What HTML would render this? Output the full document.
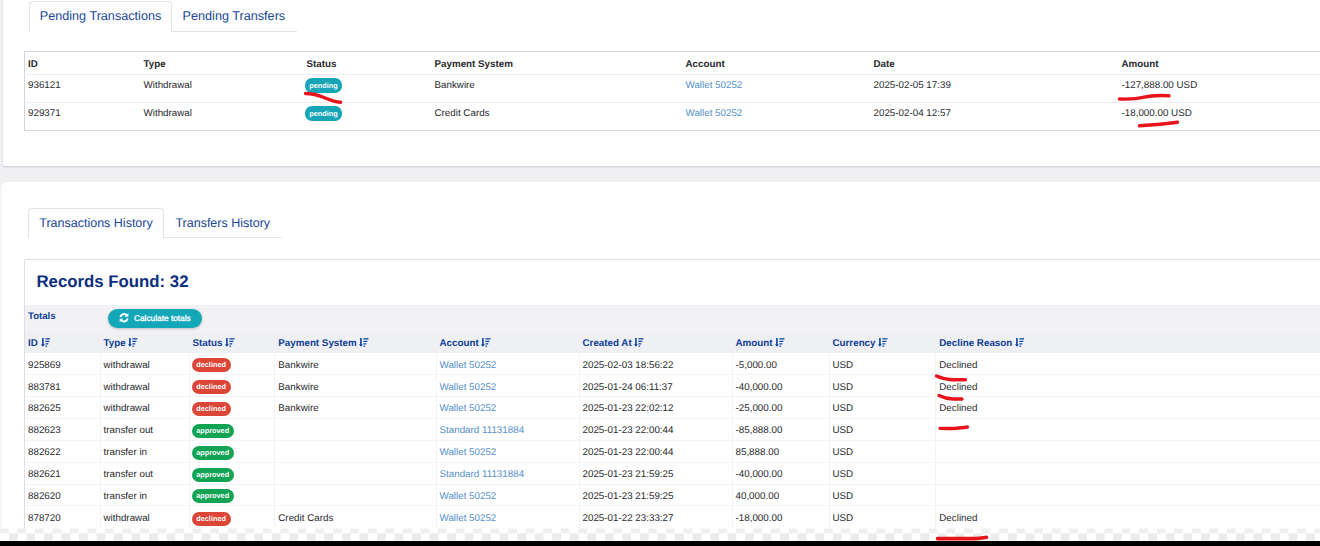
<!DOCTYPE html>
<html>
<head>
<meta charset="utf-8">
<style>
*{box-sizing:border-box;margin:0;padding:0}
html,body{width:1320px;height:546px;overflow:hidden}
body{text-rendering:geometricPrecision;background:#f0eff1;font-family:"Liberation Sans",sans-serif;color:#2a2a2e;position:relative}
.card{position:absolute;background:#fff;border-radius:4px;box-shadow:0 1px 2px rgba(120,120,150,.35)}
#c1{left:3px;top:-20px;width:1400px;height:186px;border-radius:0 0 0 2px}
#ls{position:absolute;left:0;top:185px;width:2px;height:361px;background:#f6f6f7}
#c2{left:2px;top:182px;width:1400px;height:400px}
.tabs{position:absolute;display:flex;border-bottom:1px solid #e2e3eb;font-size:12.65px;color:#1a4798}
.tab{padding:0 11px;white-space:nowrap}
.tab.act{border:1px solid #e2e3eb;border-bottom:0;border-radius:4px 4px 0 0;background:#fff;margin-bottom:-1px;padding:0;text-align:center}
#t1{left:29px;top:1px;width:268px;height:31px}
#t1 .tab{line-height:30.6px;padding:0 0 0 10.6px}
#t1 .tab.act{height:31px;width:143px;padding:0;line-height:29.6px}
#t2{left:28px;top:208px;width:254px;height:30px;font-size:12.5px}
#t2 .tab{line-height:30.6px;padding:0 0 0 11.4px}
#t2 .tab.act{height:30px;width:136px;padding:0;line-height:29.6px}
.tbl{position:absolute;border-collapse:collapse;font-size:9.8px}
#p{left:24px;top:51px;width:1400px;border:1px solid #d4d5df}
#p th,#p td{text-align:left;padding:5px 0 0 3px;height:28px;border-top:1px solid #ebecf1;vertical-align:top;line-height:12px}
#p th{height:23px;border-top:0;font-weight:bold;padding-top:7px}
.lnk{color:#5590cb}
.b{display:inline-block;color:#fff;font-weight:bold;font-size:7.3px;height:14px;line-height:14px;border-radius:7px;padding:0 4.8px;vertical-align:top}
.pen{background:#17a5b8}
.dec{background:#dc4637}
.app{background:#12a454}
#p .b{margin-top:-1.8px;margin-left:-2px;height:14.4px;line-height:15.2px}
#box{position:absolute;left:23.5px;top:259px;width:1400px;height:300px;border:1px solid #dcdde8;border-radius:2px}
#rf{position:absolute;left:36.5px;top:272px;font-size:16.8px;font-weight:bold;color:#0b2f7d}
#tot{position:absolute;left:25px;top:305px;width:1400px;height:28px;background:#f2f2f4}
#tot span.l{position:absolute;left:3px;top:6px;font-size:9.65px;font-weight:bold;color:#0f3e96}
#calc{position:absolute;left:108px;top:309px;width:94px;height:19px;border-radius:10px;background:#14a7b8;color:#fff;font-size:8.3px;line-height:19px;padding-left:26px;box-shadow:0 1px 3px rgba(0,0,0,.22);-webkit-text-stroke:.3px #fff}
#calc svg{position:absolute;left:11px;top:4.3px;width:10px;height:9.5px}
#h{left:25px;top:333px;width:1400px}
#h th{background:#eef0f4;color:#0f3e96;text-align:left;font-weight:bold;height:20px;padding:1px 0 0 3px;border-left:1px solid #f1f2f6;white-space:nowrap}
#h th:first-child,#h td:first-child{border-left:0}
#h td{height:21.85px;padding:3px 0 0 3px;border-left:1px solid #f4f4f8;border-top:1px solid #f4f4f8;vertical-align:middle}
#h .b{position:relative;top:0;margin-left:-1px}
#h tr:nth-child(2) td{border-top:0}
#h th:nth-child(4),#h td:nth-child(4),#h th:nth-child(9),#h td:nth-child(9){padding-left:3.8px}
#h tr:nth-child(4) td:not(:nth-child(3)){padding-top:1px}
svg.s{width:9.5px;height:8.8px;fill:#0c43a3;vertical-align:-0.5px;margin-left:0}
#chk{position:absolute;left:0;top:528px}
#blk{position:absolute;left:0;top:540.5px;width:1320px;height:6px;background:#000}
svg.red{position:absolute;left:0;top:0;width:1320px;height:546px;pointer-events:none}
</style>
</head>
<body>
<div class="card" id="c1"></div>
<div class="card" id="c2"></div>
<div id="ls"></div>

<div class="tabs" id="t1"><div class="tab act">Pending Transactions</div><div class="tab">Pending Transfers</div></div>

<table class="tbl" id="p">
<tr><th style="width:116px">ID</th><th style="width:163px">Type</th><th style="width:128px">Status</th><th style="width:251px">Payment System</th><th style="width:188px">Account</th><th style="width:248px">Date</th><th>Amount</th></tr>
<tr><td>936121</td><td>Withdrawal</td><td><span class="b pen">pending</span></td><td>Bankwire</td><td class="lnk">Wallet 50252</td><td>2025-02-05 17:39</td><td>-127,888.00 USD</td></tr>
<tr><td>929371</td><td>Withdrawal</td><td><span class="b pen">pending</span></td><td>Credit Cards</td><td class="lnk">Wallet 50252</td><td>2025-02-04 12:57</td><td>-18,000.00 USD</td></tr>
</table>

<div class="tabs" id="t2"><div class="tab act">Transactions History</div><div class="tab">Transfers History</div></div>

<div id="box"></div>
<div id="rf">Records Found: 32</div>
<div id="tot"><span class="l">Totals</span></div>
<div id="calc"><svg viewBox="0 0 10 9.5" fill="none" stroke="#fff" stroke-width="1.9"><path d="M1.4 4.2 A3.6 3.6 0 0 1 7.6 2.2"/><path d="M8.6 5.3 A3.6 3.6 0 0 1 2.4 7.3"/><polygon points="9.3,0.3 9.3,3.8 5.8,3.8" fill="#fff" stroke="none"/><polygon points="0.7,9.2 0.7,5.7 4.2,5.7" fill="#fff" stroke="none"/></svg>Calculate totals</div>

<table class="tbl" id="h">
<tr><th style="width:75px">ID <svg class="s" viewBox="0 0 9.5 8.8"><rect x="1.1" y="0" width="1.6" height="7.4"/><polygon points="0,6.3 3.8,6.3 1.9,8.8"/><rect x="4.4" y="0.2" width="5.1" height="1.25"/><rect x="4.4" y="2.75" width="4" height="1.2"/><rect x="4.4" y="5.25" width="2.9" height="1.2"/><rect x="4.4" y="7.6" width="1.8" height="1.1"/></svg></th><th style="width:89px">Type <svg class="s" viewBox="0 0 9.5 8.8"><rect x="1.1" y="0" width="1.6" height="7.4"/><polygon points="0,6.3 3.8,6.3 1.9,8.8"/><rect x="4.4" y="0.2" width="5.1" height="1.25"/><rect x="4.4" y="2.75" width="4" height="1.2"/><rect x="4.4" y="5.25" width="2.9" height="1.2"/><rect x="4.4" y="7.6" width="1.8" height="1.1"/></svg></th><th style="width:85px">Status <svg class="s" viewBox="0 0 9.5 8.8"><rect x="1.1" y="0" width="1.6" height="7.4"/><polygon points="0,6.3 3.8,6.3 1.9,8.8"/><rect x="4.4" y="0.2" width="5.1" height="1.25"/><rect x="4.4" y="2.75" width="4" height="1.2"/><rect x="4.4" y="5.25" width="2.9" height="1.2"/><rect x="4.4" y="7.6" width="1.8" height="1.1"/></svg></th><th style="width:162px">Payment System <svg class="s" viewBox="0 0 9.5 8.8"><rect x="1.1" y="0" width="1.6" height="7.4"/><polygon points="0,6.3 3.8,6.3 1.9,8.8"/><rect x="4.4" y="0.2" width="5.1" height="1.25"/><rect x="4.4" y="2.75" width="4" height="1.2"/><rect x="4.4" y="5.25" width="2.9" height="1.2"/><rect x="4.4" y="7.6" width="1.8" height="1.1"/></svg></th><th style="width:143px">Account <svg class="s" viewBox="0 0 9.5 8.8"><rect x="1.1" y="0" width="1.6" height="7.4"/><polygon points="0,6.3 3.8,6.3 1.9,8.8"/><rect x="4.4" y="0.2" width="5.1" height="1.25"/><rect x="4.4" y="2.75" width="4" height="1.2"/><rect x="4.4" y="5.25" width="2.9" height="1.2"/><rect x="4.4" y="7.6" width="1.8" height="1.1"/></svg></th><th style="width:153px">Created At <svg class="s" viewBox="0 0 9.5 8.8"><rect x="1.1" y="0" width="1.6" height="7.4"/><polygon points="0,6.3 3.8,6.3 1.9,8.8"/><rect x="4.4" y="0.2" width="5.1" height="1.25"/><rect x="4.4" y="2.75" width="4" height="1.2"/><rect x="4.4" y="5.25" width="2.9" height="1.2"/><rect x="4.4" y="7.6" width="1.8" height="1.1"/></svg></th><th style="width:97px">Amount <svg class="s" viewBox="0 0 9.5 8.8"><rect x="1.1" y="0" width="1.6" height="7.4"/><polygon points="0,6.3 3.8,6.3 1.9,8.8"/><rect x="4.4" y="0.2" width="5.1" height="1.25"/><rect x="4.4" y="2.75" width="4" height="1.2"/><rect x="4.4" y="5.25" width="2.9" height="1.2"/><rect x="4.4" y="7.6" width="1.8" height="1.1"/></svg></th><th style="width:106px">Currency <svg class="s" viewBox="0 0 9.5 8.8"><rect x="1.1" y="0" width="1.6" height="7.4"/><polygon points="0,6.3 3.8,6.3 1.9,8.8"/><rect x="4.4" y="0.2" width="5.1" height="1.25"/><rect x="4.4" y="2.75" width="4" height="1.2"/><rect x="4.4" y="5.25" width="2.9" height="1.2"/><rect x="4.4" y="7.6" width="1.8" height="1.1"/></svg></th><th>Decline Reason <svg class="s" viewBox="0 0 9.5 8.8"><rect x="1.1" y="0" width="1.6" height="7.4"/><polygon points="0,6.3 3.8,6.3 1.9,8.8"/><rect x="4.4" y="0.2" width="5.1" height="1.25"/><rect x="4.4" y="2.75" width="4" height="1.2"/><rect x="4.4" y="5.25" width="2.9" height="1.2"/><rect x="4.4" y="7.6" width="1.8" height="1.1"/></svg></th></tr>
<tr><td>925869</td><td>withdrawal</td><td><span class="b dec">declined</span></td><td>Bankwire</td><td class="lnk">Wallet 50252</td><td>2025-02-03 18:56:22</td><td>-5,000.00</td><td>USD</td><td>Declined</td></tr>
<tr><td>883781</td><td>withdrawal</td><td><span class="b dec">declined</span></td><td>Bankwire</td><td class="lnk">Wallet 50252</td><td>2025-01-24 06:11:37</td><td>-40,000.00</td><td>USD</td><td>Declined</td></tr>
<tr><td>882625</td><td>withdrawal</td><td><span class="b dec">declined</span></td><td>Bankwire</td><td class="lnk">Wallet 50252</td><td>2025-01-23 22:02:12</td><td>-25,000.00</td><td>USD</td><td>Declined</td></tr>
<tr><td>882623</td><td>transfer out</td><td><span class="b app">approved</span></td><td></td><td class="lnk">Standard 11131884</td><td>2025-01-23 22:00:44</td><td>-85,888.00</td><td>USD</td><td></td></tr>
<tr><td>882622</td><td>transfer in</td><td><span class="b app">approved</span></td><td></td><td class="lnk">Wallet 50252</td><td>2025-01-23 22:00:44</td><td>85,888.00</td><td>USD</td><td></td></tr>
<tr><td>882621</td><td>transfer out</td><td><span class="b app">approved</span></td><td></td><td class="lnk">Standard 11131884</td><td>2025-01-23 21:59:25</td><td>-40,000.00</td><td>USD</td><td></td></tr>
<tr><td>882620</td><td>transfer in</td><td><span class="b app">approved</span></td><td></td><td class="lnk">Wallet 50252</td><td>2025-01-23 21:59:25</td><td>40,000.00</td><td>USD</td><td></td></tr>
<tr><td>878720</td><td>withdrawal</td><td><span class="b dec">declined</span></td><td>Credit Cards</td><td class="lnk">Wallet 50252</td><td>2025-01-22 23:33:27</td><td>-18,000.00</td><td>USD</td><td>Declined</td></tr>
</table>

<svg id="chk" viewBox="0 0 1320 13" width="1320" height="13"><rect width="1320" height="13" fill="#fff"/><g fill="#ebebeb"><rect x="-0.20" y="0.5" width="8.77" height="4.8" fill="#efefef"/><rect x="8.87" y="5.3" width="8.77" height="7.2"/><rect x="17.33" y="0.5" width="8.77" height="4.8" fill="#efefef"/><rect x="26.40" y="5.3" width="8.77" height="7.2"/><rect x="34.86" y="0.5" width="8.77" height="4.8" fill="#efefef"/><rect x="43.92" y="5.3" width="8.77" height="7.2"/><rect x="52.39" y="0.5" width="8.77" height="4.8" fill="#efefef"/><rect x="61.45" y="5.3" width="8.77" height="7.2"/><rect x="69.92" y="0.5" width="8.77" height="4.8" fill="#efefef"/><rect x="78.98" y="5.3" width="8.77" height="7.2"/><rect x="87.45" y="0.5" width="8.77" height="4.8" fill="#efefef"/><rect x="96.52" y="5.3" width="8.77" height="7.2"/><rect x="104.98" y="0.5" width="8.77" height="4.8" fill="#efefef"/><rect x="114.05" y="5.3" width="8.77" height="7.2"/><rect x="122.51" y="0.5" width="8.77" height="4.8" fill="#efefef"/><rect x="131.58" y="5.3" width="8.77" height="7.2"/><rect x="140.04" y="0.5" width="8.77" height="4.8" fill="#efefef"/><rect x="149.11" y="5.3" width="8.77" height="7.2"/><rect x="157.57" y="0.5" width="8.77" height="4.8" fill="#efefef"/><rect x="166.64" y="5.3" width="8.77" height="7.2"/><rect x="175.10" y="0.5" width="8.77" height="4.8" fill="#efefef"/><rect x="184.17" y="5.3" width="8.77" height="7.2"/><rect x="192.63" y="0.5" width="8.77" height="4.8" fill="#efefef"/><rect x="201.70" y="5.3" width="8.77" height="7.2"/><rect x="210.16" y="0.5" width="8.77" height="4.8" fill="#efefef"/><rect x="219.23" y="5.3" width="8.77" height="7.2"/><rect x="227.69" y="0.5" width="8.77" height="4.8" fill="#efefef"/><rect x="236.76" y="5.3" width="8.77" height="7.2"/><rect x="245.22" y="0.5" width="8.77" height="4.8" fill="#efefef"/><rect x="254.29" y="5.3" width="8.77" height="7.2"/><rect x="262.75" y="0.5" width="8.77" height="4.8" fill="#efefef"/><rect x="271.81" y="5.3" width="8.77" height="7.2"/><rect x="280.28" y="0.5" width="8.77" height="4.8" fill="#efefef"/><rect x="289.34" y="5.3" width="8.77" height="7.2"/><rect x="297.81" y="0.5" width="8.77" height="4.8" fill="#efefef"/><rect x="306.87" y="5.3" width="8.77" height="7.2"/><rect x="315.34" y="0.5" width="8.77" height="4.8" fill="#efefef"/><rect x="324.40" y="5.3" width="8.77" height="7.2"/><rect x="332.87" y="0.5" width="8.77" height="4.8" fill="#efefef"/><rect x="341.93" y="5.3" width="8.77" height="7.2"/><rect x="350.40" y="0.5" width="8.77" height="4.8" fill="#efefef"/><rect x="359.46" y="5.3" width="8.77" height="7.2"/><rect x="367.93" y="0.5" width="8.77" height="4.8" fill="#efefef"/><rect x="376.99" y="5.3" width="8.77" height="7.2"/><rect x="385.46" y="0.5" width="8.77" height="4.8" fill="#efefef"/><rect x="394.52" y="5.3" width="8.77" height="7.2"/><rect x="402.99" y="0.5" width="8.77" height="4.8" fill="#efefef"/><rect x="412.05" y="5.3" width="8.77" height="7.2"/><rect x="420.52" y="0.5" width="8.77" height="4.8" fill="#efefef"/><rect x="429.58" y="5.3" width="8.77" height="7.2"/><rect x="438.05" y="0.5" width="8.77" height="4.8" fill="#efefef"/><rect x="447.11" y="5.3" width="8.77" height="7.2"/><rect x="455.58" y="0.5" width="8.77" height="4.8" fill="#efefef"/><rect x="464.64" y="5.3" width="8.77" height="7.2"/><rect x="473.11" y="0.5" width="8.77" height="4.8" fill="#efefef"/><rect x="482.17" y="5.3" width="8.77" height="7.2"/><rect x="490.64" y="0.5" width="8.77" height="4.8" fill="#efefef"/><rect x="499.70" y="5.3" width="8.77" height="7.2"/><rect x="508.17" y="0.5" width="8.77" height="4.8" fill="#efefef"/><rect x="517.23" y="5.3" width="8.77" height="7.2"/><rect x="525.70" y="0.5" width="8.77" height="4.8" fill="#efefef"/><rect x="534.76" y="5.3" width="8.77" height="7.2"/><rect x="543.23" y="0.5" width="8.77" height="4.8" fill="#efefef"/><rect x="552.29" y="5.3" width="8.77" height="7.2"/><rect x="560.76" y="0.5" width="8.77" height="4.8" fill="#efefef"/><rect x="569.82" y="5.3" width="8.77" height="7.2"/><rect x="578.29" y="0.5" width="8.77" height="4.8" fill="#efefef"/><rect x="587.35" y="5.3" width="8.77" height="7.2"/><rect x="595.82" y="0.5" width="8.77" height="4.8" fill="#efefef"/><rect x="604.88" y="5.3" width="8.77" height="7.2"/><rect x="613.35" y="0.5" width="8.77" height="4.8" fill="#efefef"/><rect x="622.41" y="5.3" width="8.77" height="7.2"/><rect x="630.88" y="0.5" width="8.77" height="4.8" fill="#efefef"/><rect x="639.94" y="5.3" width="8.77" height="7.2"/><rect x="648.41" y="0.5" width="8.77" height="4.8" fill="#efefef"/><rect x="657.47" y="5.3" width="8.77" height="7.2"/><rect x="665.94" y="0.5" width="8.77" height="4.8" fill="#efefef"/><rect x="675.00" y="5.3" width="8.77" height="7.2"/><rect x="683.47" y="0.5" width="8.77" height="4.8" fill="#efefef"/><rect x="692.53" y="5.3" width="8.77" height="7.2"/><rect x="701.00" y="0.5" width="8.77" height="4.8" fill="#efefef"/><rect x="710.06" y="5.3" width="8.77" height="7.2"/><rect x="718.53" y="0.5" width="8.77" height="4.8" fill="#efefef"/><rect x="727.59" y="5.3" width="8.77" height="7.2"/><rect x="736.06" y="0.5" width="8.77" height="4.8" fill="#efefef"/><rect x="745.12" y="5.3" width="8.77" height="7.2"/><rect x="753.59" y="0.5" width="8.77" height="4.8" fill="#efefef"/><rect x="762.65" y="5.3" width="8.77" height="7.2"/><rect x="771.12" y="0.5" width="8.77" height="4.8" fill="#efefef"/><rect x="780.18" y="5.3" width="8.77" height="7.2"/><rect x="788.65" y="0.5" width="8.77" height="4.8" fill="#efefef"/><rect x="797.71" y="5.3" width="8.77" height="7.2"/><rect x="806.18" y="0.5" width="8.77" height="4.8" fill="#efefef"/><rect x="815.24" y="5.3" width="8.77" height="7.2"/><rect x="823.71" y="0.5" width="8.77" height="4.8" fill="#efefef"/><rect x="832.77" y="5.3" width="8.77" height="7.2"/><rect x="841.24" y="0.5" width="8.77" height="4.8" fill="#efefef"/><rect x="850.30" y="5.3" width="8.77" height="7.2"/><rect x="858.77" y="0.5" width="8.77" height="4.8" fill="#efefef"/><rect x="867.83" y="5.3" width="8.77" height="7.2"/><rect x="876.30" y="0.5" width="8.77" height="4.8" fill="#efefef"/><rect x="885.36" y="5.3" width="8.77" height="7.2"/><rect x="893.83" y="0.5" width="8.77" height="4.8" fill="#efefef"/><rect x="902.89" y="5.3" width="8.77" height="7.2"/><rect x="911.36" y="0.5" width="8.77" height="4.8" fill="#efefef"/><rect x="920.42" y="5.3" width="8.77" height="7.2"/><rect x="928.89" y="0.5" width="8.77" height="4.8" fill="#efefef"/><rect x="937.95" y="5.3" width="8.77" height="7.2"/><rect x="946.42" y="0.5" width="8.77" height="4.8" fill="#efefef"/><rect x="955.48" y="5.3" width="8.77" height="7.2"/><rect x="963.95" y="0.5" width="8.77" height="4.8" fill="#efefef"/><rect x="973.01" y="5.3" width="8.77" height="7.2"/><rect x="981.48" y="0.5" width="8.77" height="4.8" fill="#efefef"/><rect x="990.54" y="5.3" width="8.77" height="7.2"/><rect x="999.01" y="0.5" width="8.77" height="4.8" fill="#efefef"/><rect x="1008.07" y="5.3" width="8.77" height="7.2"/><rect x="1016.54" y="0.5" width="8.77" height="4.8" fill="#efefef"/><rect x="1025.60" y="5.3" width="8.77" height="7.2"/><rect x="1034.07" y="0.5" width="8.77" height="4.8" fill="#efefef"/><rect x="1043.13" y="5.3" width="8.77" height="7.2"/><rect x="1051.60" y="0.5" width="8.77" height="4.8" fill="#efefef"/><rect x="1060.66" y="5.3" width="8.77" height="7.2"/><rect x="1069.13" y="0.5" width="8.77" height="4.8" fill="#efefef"/><rect x="1078.19" y="5.3" width="8.77" height="7.2"/><rect x="1086.66" y="0.5" width="8.77" height="4.8" fill="#efefef"/><rect x="1095.72" y="5.3" width="8.77" height="7.2"/><rect x="1104.19" y="0.5" width="8.77" height="4.8" fill="#efefef"/><rect x="1113.25" y="5.3" width="8.77" height="7.2"/><rect x="1121.72" y="0.5" width="8.77" height="4.8" fill="#efefef"/><rect x="1130.78" y="5.3" width="8.77" height="7.2"/><rect x="1139.25" y="0.5" width="8.77" height="4.8" fill="#efefef"/><rect x="1148.31" y="5.3" width="8.77" height="7.2"/><rect x="1156.78" y="0.5" width="8.77" height="4.8" fill="#efefef"/><rect x="1165.84" y="5.3" width="8.77" height="7.2"/><rect x="1174.31" y="0.5" width="8.77" height="4.8" fill="#efefef"/><rect x="1183.37" y="5.3" width="8.77" height="7.2"/><rect x="1191.84" y="0.5" width="8.77" height="4.8" fill="#efefef"/><rect x="1200.90" y="5.3" width="8.77" height="7.2"/><rect x="1209.37" y="0.5" width="8.77" height="4.8" fill="#efefef"/><rect x="1218.43" y="5.3" width="8.77" height="7.2"/><rect x="1226.90" y="0.5" width="8.77" height="4.8" fill="#efefef"/><rect x="1235.96" y="5.3" width="8.77" height="7.2"/><rect x="1244.43" y="0.5" width="8.77" height="4.8" fill="#efefef"/><rect x="1253.49" y="5.3" width="8.77" height="7.2"/><rect x="1261.96" y="0.5" width="8.77" height="4.8" fill="#efefef"/><rect x="1271.02" y="5.3" width="8.77" height="7.2"/><rect x="1279.49" y="0.5" width="8.77" height="4.8" fill="#efefef"/><rect x="1288.55" y="5.3" width="8.77" height="7.2"/><rect x="1297.02" y="0.5" width="8.77" height="4.8" fill="#efefef"/><rect x="1306.08" y="5.3" width="8.77" height="7.2"/><rect x="1314.55" y="0.5" width="8.77" height="4.8" fill="#efefef"/><rect x="1323.61" y="5.3" width="8.77" height="7.2"/></g></svg>
<div id="blk"></div>
<svg class="red" viewBox="0 0 1320 546"><g fill="none" stroke="#e8141c" stroke-width="3.4" stroke-linecap="round" stroke-linejoin="round">
<path d="M305.5 93.5 C312 93.5 318 95 324 97.5 C330 100 335 101.8 340.5 102.3"/>
<path d="M1119.5 99 C1128 99.3 1137 99 1144 97.2 C1152 95.3 1160 95.2 1169 95.8"/>
<path d="M1139.5 125.8 C1152 125 1166 123.8 1177.5 122.2"/>
<path d="M936.5 376 C941 378 946 379.6 952 379.7 L965.5 379.7"/>
<path d="M939 395.5 C943 397.5 948 399 953 399 L962 399"/>
<path d="M940 428.4 C946 428.6 954 428.6 959 428 C962 427.6 965 427.2 967.5 427"/>
<path d="M937.5 538.6 L975 538.6 C980 538.4 984 537.6 986.5 537.2" stroke-width="3.6"/>
</g></svg>
</body>
</html>
